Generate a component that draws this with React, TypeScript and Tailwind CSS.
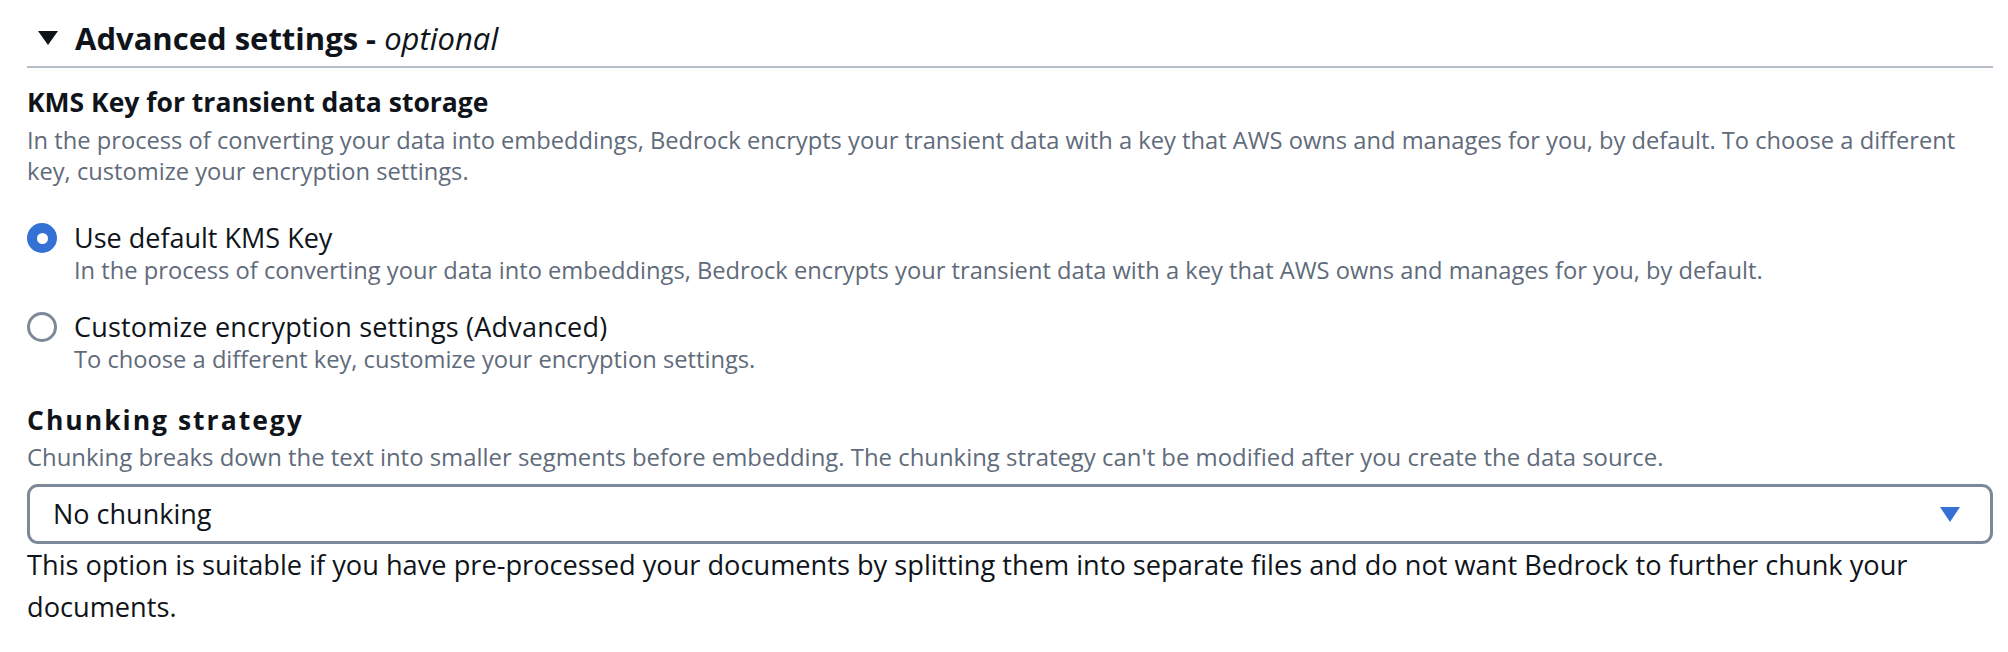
import React from "react";

function Radio({ checked }: { checked: boolean }) {
  if (checked) {
    return (
      <div className="mt-[2px] w-[30px] h-[30px] shrink-0 rounded-full bg-[#3471d5] flex items-center justify-center">
        <div className="w-[11px] h-[11px] rounded-full bg-white" />
      </div>
    );
  }
  return <div className="mt-[2px] w-[30px] h-[30px] shrink-0 rounded-full border-[3.5px] border-[#7d8998] bg-white" />;
}

export default function App() {
  return (
    <div className="min-h-screen bg-white font-['Open_Sans',sans-serif] text-[#0f141a] pl-[27px] pr-[15px] pt-[18px]">
      {/* Section header */}
      <div className="flex items-center gap-[17px] h-[40px] pl-[11px]">
        <svg width="20" height="14" viewBox="0 0 20 14" className="shrink-0">
          <polygon points="0,0 20,0 10,14" fill="#0f141a" />
        </svg>
        <h2 className="text-[31px] leading-[40px] font-bold">
          Advanced settings - <span className="italic font-normal">optional</span>
        </h2>
      </div>
      <div className="mt-[8px] h-[2px] bg-[#b6bec9]" />

      {/* KMS key */}
      <div className="mt-[17px] text-[26.5px] leading-[34px] font-bold">KMS Key for transient data storage</div>
      <div className="mt-[6px] text-[23.7px] leading-[31px] text-[#5f6b7a] whitespace-nowrap">
        In the process of converting your data into embeddings, Bedrock encrypts your transient data with a key that AWS owns and manages for you, by default. To choose a different
        <br />
        key, customize your encryption settings.
      </div>

      <div className="mt-[34px] flex flex-col gap-[24px]">
        <div className="flex gap-[17px]">
          <Radio checked />
          <div>
            <div className="text-[27px] leading-[34px]">Use default KMS Key</div>
            <div className="text-[23.7px] leading-[31px] text-[#5f6b7a]">
              In the process of converting your data into embeddings, Bedrock encrypts your transient data with a key that AWS owns and manages for you, by default.
            </div>
          </div>
        </div>
        <div className="flex gap-[17px]">
          <Radio checked={false} />
          <div>
            <div className="text-[27px] leading-[34px] tracking-[0.2px]">Customize encryption settings (Advanced)</div>
            <div className="text-[23.7px] leading-[31px] text-[#5f6b7a]">
              To choose a different key, customize your encryption settings.
            </div>
          </div>
        </div>
      </div>

      {/* Chunking */}
      <div className="mt-[28px] text-[26.5px] leading-[34px] font-bold tracking-[2px]">Chunking strategy</div>
      <div className="mt-[4px] text-[23.9px] leading-[31px] text-[#5f6b7a]">
        Chunking breaks down the text into smaller segments before embedding. The chunking strategy can't be modified after you create the data source.
      </div>
      <div className="mt-[12px] h-[60px] rounded-[11px] border-[3px] border-[#7d8998] flex items-center justify-between pl-[23px] pr-[30px]">
        <span className="text-[27px] leading-[34px]">No chunking</span>
        <svg width="20" height="15" viewBox="0 0 20 15">
          <polygon points="0,0 20,0 10,15" fill="#3471d5" />
        </svg>
      </div>
      <div className="text-[27.2px] leading-[42px] whitespace-nowrap">
        This option is suitable if you have pre-processed your documents by splitting them into separate files and do not want Bedrock to further chunk your
        <br />
        documents.
      </div>
    </div>
  );
}
